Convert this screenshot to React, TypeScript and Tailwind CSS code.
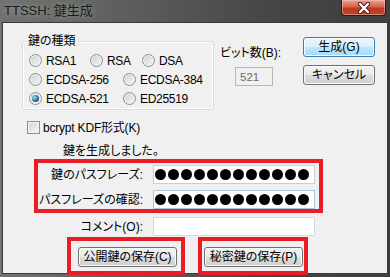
import React from "react";

const FONT =
  "[font-family:'Liberation_Sans','Noto_Sans_CJK_JP',sans-serif] [font-feature-settings:'palt']";

function Radio({ label, checked, w }: { label: string; checked?: boolean; w: string }) {
  return (
    <div className={`flex items-center h-[19px] ${w}`}>
      <span className="w-[13px] h-[13px] shrink-0 rounded-full border border-[#8e8f8f] bg-[linear-gradient(135deg,#cfcfcf,#f7f7f7)] shadow-[inset_0_0_0_1px_#f2f2f2] flex items-center justify-center">
        {checked && (
          <span className="w-[7px] h-[7px] rounded-full bg-[radial-gradient(circle_at_35%_35%,#a6dcf7,#2d6f9f_55%,#123d5e)]" />
        )}
      </span>
      <span className="ml-[4px] tracking-[-0.3px] whitespace-nowrap">{label}</span>
    </div>
  );
}

function Button({ children, primary }: { children: React.ReactNode; primary?: boolean }) {
  return (
    <div
      className={
        primary
          ? "w-[72px] h-[20px] rounded-[3px] border border-[#3c7fb1] bg-[linear-gradient(#eaf6fd_0%,#d9f0fc_50%,#bee6fd_51%,#a7d9f5_100%)] shadow-[inset_0_0_0_1px_#f4fbff] flex items-center justify-center whitespace-nowrap"
          : "w-[72px] h-[20px] rounded-[3px] border border-[#707070] bg-[linear-gradient(#f2f2f2_0%,#ebebeb_50%,#dddddd_51%,#cfcfcf_100%)] shadow-[inset_0_0_0_1px_#fafafa] flex items-center justify-center whitespace-nowrap"
      }
    >
      {children}
    </div>
  );
}

function SaveButton({ children }: { children: React.ReactNode }) {
  return (
    <div className="w-[99px] h-[20px] rounded-[3px] border border-[#707070] bg-[linear-gradient(#f2f2f2_0%,#ebebeb_50%,#dddddd_51%,#cfcfcf_100%)] shadow-[inset_0_0_0_1px_#fafafa] flex items-center justify-center whitespace-nowrap">
      {children}
    </div>
  );
}

function Dots() {
  return (
    <div className="flex gap-[2px] pl-[1px]">
      {Array.from({ length: 12 }).map((_, i) => (
        <span key={i} className="w-[11px] h-[11px] rounded-full bg-black" />
      ))}
    </div>
  );
}

export default function App() {
  return (
    <div
      className={`${FONT} w-[390px] h-[277px] overflow-hidden flex flex-col text-[12px] leading-[14px] text-black bg-[linear-gradient(90deg,#70736f,#5a5d59_35%,#434642_70%,#3d403c)]`}
    >
      {/* title bar */}
      <div className="h-[22px] flex items-start justify-between shrink-0">
        <div className="pl-[4px] pt-[4px] text-[13px] leading-[14px] text-[#1a1a1a] [text-shadow:0_0_6px_rgba(255,255,255,0.45)]">
          TTSSH: 鍵生成
        </div>
        <div className="mr-[4px] w-[45px] h-[16px] rounded-b-[4px] border border-t-0 border-[#3b1510] bg-[linear-gradient(#e7a08e_0%,#d4654c_45%,#c2381d_55%,#b8472e_100%)] shadow-[inset_0_0_0_1px_rgba(255,200,190,0.5)] flex items-center justify-center">
          <svg width="14" height="12" viewBox="0 0 14 12">
            <path d="M3 2 L11 10 M11 2 L3 10" stroke="#4a1a12" strokeWidth="4.2" strokeLinecap="round" />
            <path d="M3 2 L11 10 M11 2 L3 10" stroke="#ffffff" strokeWidth="2.4" strokeLinecap="round" />
          </svg>
        </div>
      </div>

      {/* client area */}
      <div className="ml-[2px] w-[386px] h-[252px] border border-[#3a3a3a] bg-[#f0f0f0] pl-[1px] flex flex-col shrink-0">
        {/* top row */}
        <div className="flex items-start">
          <fieldset className="ml-[18px] mt-[11px] w-[192px] border border-[#d5dfe5] rounded-[3px] pl-[6px] pt-[3px] pb-[1px] shadow-[inset_0_0_0_1px_#ffffff]">
            <legend className="px-[1px] -ml-[2px] leading-[14px]">鍵の種類</legend>
            <div className="flex">
              <Radio label="RSA1" w="w-[61px]" />
              <Radio label="RSA" w="w-[52px]" />
              <Radio label="DSA" w="w-[60px]" />
            </div>
            <div className="flex">
              <Radio label="ECDSA-256" w="w-[94px]" />
              <Radio label="ECDSA-384" w="w-[84px]" />
            </div>
            <div className="flex">
              <Radio label="ECDSA-521" w="w-[94px]" checked />
              <Radio label="ED25519" w="w-[84px]" />
            </div>
          </fieldset>

          <div className="ml-[6px] mt-[23px] w-[83px] flex flex-col">
            <div className="whitespace-nowrap">ビット数(B):</div>
            <div className="ml-[15px] mt-[7px] w-[38px] h-[19px] border border-[#b5b8bb] bg-[#f0f0f0] text-[#6d6d6d] pl-[4px] flex items-center text-[11.5px]">
              521
            </div>
          </div>

          <div className="mt-[14px] flex flex-col gap-[8px]">
            <Button primary>生成(G)</Button>
            <Button>キャンセル</Button>
          </div>
        </div>

        {/* checkbox */}
        <div className="ml-[23px] mt-[11px] h-[13px] flex items-center">
          <span className="w-[13px] h-[13px] border border-[#8e8f8f] bg-[linear-gradient(135deg,#d2d2d2,#f8f8f8)] shadow-[inset_0_0_0_1px_#f4f4f4]" />
          <span className="ml-[3px] whitespace-nowrap tracking-[-0.2px]">bcrypt KDF形式(K)</span>
        </div>

        {/* status */}
        <div className="ml-[59px] mt-[10px] whitespace-nowrap">鍵を生成しました。</div>

        {/* red box 1 */}
        <div className="ml-[30px] mt-[1px] w-[289px] border-4 border-[#e81d25] flex flex-col pt-[2px] gap-[6px]">
          <div className="flex items-center">
            <div className="w-[105px] text-right whitespace-nowrap">鍵のパスフレーズ:</div>
            <div className="ml-[10px] w-[162px] h-[19px] border border-[#c9ced3] bg-white flex items-center">
              <Dots />
            </div>
          </div>
          <div className="flex items-center">
            <div className="w-[105px] text-right whitespace-nowrap">パスフレーズの確認:</div>
            <div className="ml-[10px] w-[162px] h-[19px] border border-[#a9c6e2] bg-white flex items-center">
              <Dots />
            </div>
          </div>
        </div>

        {/* comment */}
        <div className="ml-[34px] mt-[4px] flex items-center">
          <div className="w-[105px] text-right whitespace-nowrap">コメント(O):</div>
          <div className="ml-[10px] w-[162px] h-[19px] border border-[#d5d9dd] bg-white" />
        </div>

        {/* save buttons */}
        <div className="mt-[1px] flex">
          <div className="ml-[63px] w-[118px] h-[38px] border-4 border-[#e81d25] pl-[7px] pt-[6px]">
            <SaveButton>公開鍵の保存(C)</SaveButton>
          </div>
          <div className="ml-[13px] w-[110px] h-[38px] border-4 border-[#e81d25] pl-[2px] pt-[6px]">
            <SaveButton>秘密鍵の保存(P)</SaveButton>
          </div>
        </div>
      </div>
    </div>
  );
}
